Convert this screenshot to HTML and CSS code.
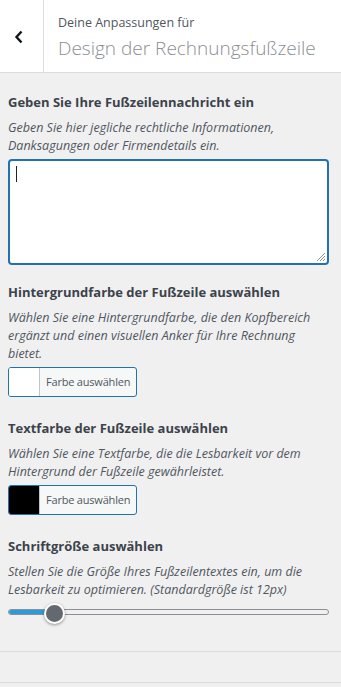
FILE: index.html
```html
<!DOCTYPE html>
<html lang="de">
<head>
<meta charset="utf-8">
<link rel="stylesheet" href="styles.css">
</head>
<body>
<div class="header">
  <div class="back">
    <svg width="12" height="16" viewBox="0 0 12 16"><path d="M8.5 2.5 L3.5 8 L8.5 13.5" fill="none" stroke="#101517" stroke-width="2.4"/></svg>
  </div>
  <div class="titles">
    <div class="pre">Deine Anpassungen für</div>
    <div class="title">Design der Rechnungsfußzeile</div>
  </div>
</div>
<div class="content">
  <div class="section">
    <div class="label">Geben Sie Ihre Fußzeilennachricht ein</div>
    <div class="desc">Geben Sie hier jegliche rechtliche Informationen,<br>Danksagungen oder Firmendetails ein.</div>
    <div class="textarea"><span class="caret"></span>
      <svg class="grip" width="10" height="10" viewBox="0 0 10 10"><path d="M9 1 L1 9 M9 4 L4 9 M9 7 L7 9" stroke="#8c8f94" stroke-width="1"/></svg>
    </div>
  </div>
  <div class="section color">
    <div class="label">Hintergrundfarbe der Fußzeile auswählen</div>
    <div class="desc">Wählen Sie eine Hintergrundfarbe, die den Kopfbereich<br>ergänzt und einen visuellen Anker für Ihre Rechnung<br>bietet.</div>
    <div class="colorbtn"><span class="swatch white"></span><span class="btntext">Farbe auswählen</span></div>
  </div>
  <div class="section color">
    <div class="label">Textfarbe der Fußzeile auswählen</div>
    <div class="desc">Wählen Sie eine Textfarbe, die die Lesbarkeit vor dem<br>Hintergrund der Fußzeile gewährleistet.</div>
    <div class="colorbtn"><span class="swatch black"></span><span class="btntext">Farbe auswählen</span></div>
  </div>
  <div class="section last">
    <div class="label">Schriftgröße auswählen</div>
    <div class="desc">Stellen Sie die Größe Ihres Fußzeilentextes ein, um die<br>Lesbarkeit zu optimieren. (Standardgröße ist 12px)</div>
    <div class="slider">
      <div class="track"><div class="fill"></div></div>
      <div class="thumb"></div>
    </div>
  </div>
</div>
<div class="divider one"></div>
<div class="divider two"></div>
</body>
</html>
```
FILE: styles.css
```css
html, body {
  margin: 0;
  padding: 0;
  background: #f0f0f1;
  font-family: "Open Sans", "Noto Sans", sans-serif;
  color: #50575e;
}
.header {
  display: flex;
  height: 72px;
  background: #fff;
  border-bottom: 1px solid #dcdcde;
}
.back {
  width: 43px;
  border-right: 1px solid #dcdcde;
  display: flex;
  align-items: center;
  justify-content: center;
}
.back svg { margin-right: 6px; margin-top: 2px; }
.titles {
  padding-left: 14px;
  padding-top: 15px;
}
.pre {
  font-size: 12.5px;
  line-height: 16px;
  color: #50575e;
}
.title {
  font-size: 19px;
  line-height: 26px;
  margin-top: 4px;
  font-weight: 300;
  color: #8c8f94;
}
.content {
  padding: 19px 12px 0 8px;
}
.section {
  margin-bottom: 17px;
}
.section.color {
  margin-bottom: 21px;
}
.section.last {
  margin-bottom: 0;
}
.label {
  font-size: 13px;
  font-weight: 700;
  line-height: 20px;
  color: #3c434a;
}
.desc {
  font-size: 12.5px;
  font-style: italic;
  line-height: 18px;
  margin-top: 7px;
  color: #50575e;
  white-space: nowrap;
}
.textarea {
  position: relative;
  margin-top: 4px;
  height: 102px;
  background: #fff;
  border: 2px solid #2271b1;
  border-radius: 4px;
}
.caret {
  position: absolute;
  left: 6px;
  top: 5px;
  width: 1px;
  height: 16px;
  background: #1d2327;
}
.grip {
  position: absolute;
  right: 1px;
  bottom: 1px;
}
.colorbtn {
  display: flex;
  margin-top: 4px;
  width: 127px;
  height: 28px;
  border: 1px solid #2271b1;
  border-radius: 3px;
  background: #f6f7f7;
  overflow: hidden;
}
.swatch {
  width: 30px;
  flex: none;
  border-right: 1px solid #c3c4c7;
}
.swatch.white { background: #fff; }
.swatch.black { background: #000; }
.btntext {
  font-size: 11px;
  letter-spacing: -0.2px;
  line-height: 28px;
  padding-left: 6px;
  white-space: nowrap;
  color: #50575e;
}
.slider {
  position: relative;
  margin-top: 3px;
  height: 20px;
  display: flex;
  align-items: center;
}
.track {
  flex: 1;
  height: 4px;
  border: 1px solid #8c8f94;
  border-radius: 3px;
  background: #f0f0f1;
  overflow: hidden;
}
.fill {
  width: 44px;
  height: 100%;
  background: #2c9ad8;
}
.thumb {
  position: absolute;
  left: 36px;
  top: 1px;
  width: 17px;
  height: 17px;
  border-radius: 50%;
  background: #646970;
  border: 2px solid #fff;
  box-shadow: 0 1px 3px rgba(0,0,0,0.4);
}
.divider {
  border-top: 1px solid #dcdcde;
}
.divider.one { margin-top: 29px; }
.divider.two { margin-top: 30px; }
```
